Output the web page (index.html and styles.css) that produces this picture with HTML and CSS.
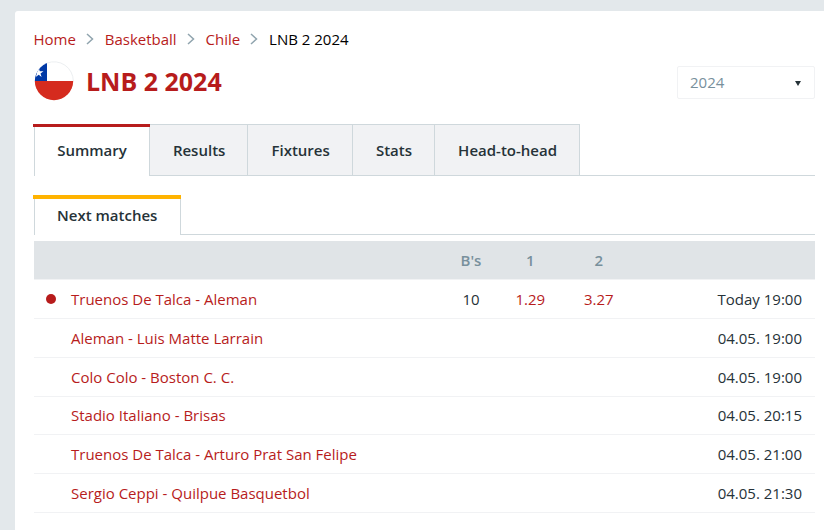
FILE: index.html
```html
<!DOCTYPE html>
<html lang="en">

<head>
  <meta charset="UTF-8">
  <meta name="viewport" content="width=device-width, initial-scale=1.0">
  <title>LNB 2 2024</title>
  <link rel="stylesheet" href="styles.css">
</head>

<body>
  <main class="card">
    <nav class="breadcrumb">
      <a href="#">Home</a>
      <svg class="chevron" viewBox="0 0 8 12"><path d="M1 1l5.500 5L1 11"/></svg>
      <a href="#">Basketball</a>
      <svg class="chevron" viewBox="0 0 8 12"><path d="M1 1l5.500 5L1 11"/></svg>
      <a href="#">Chile</a>
      <svg class="chevron" viewBox="0 0 8 12"><path d="M1 1l5.500 5L1 11"/></svg>
      <span>LNB 2 2024</span>
    </nav>

    <header class="title-bar">
      <svg class="flag" viewBox="0 0 40 40">
        <clipPath id="round"><circle cx="20" cy="20" r="19.200"/></clipPath>
        <g clip-path="url(#round)">
          <path fill="#fff" d="M0 0h40v20H0z"/>
          <path fill="#0039a6" d="M0 0h13v20H0z"/>
          <path fill="#d52b1e" d="M0 20h40v20H0z"/>
          <path fill="#fff" d="M4.700 6.700l1.100 3.500h3.700l-3 2.200 1.100 3.500-2.900-2.100-3 2.100 1.200-3.500-3-2.200h3.700z"/>
        </g>
        <path class="flag-rim" d="M13 2.100A19.300 19.300 0 0 1 39.300 20"/>
      </svg>
      <h1>LNB 2 2024</h1>
      <div class="season">
        <span>2024</span>
        <svg class="caret" viewBox="0 0 6 5"><path d="M0 0h6L3 5z"/></svg>
      </div>
    </header>

    <ul class="tabs">
      <li class="tab active">Summary</li>
      <li class="tab">Results</li>
      <li class="tab">Fixtures</li>
      <li class="tab">Stats</li>
      <li class="tab">Head-to-head</li>
    </ul>

    <div class="subtabs">
      <div class="subtab">Next matches</div>
    </div>

    <table class="matches">
      <colgroup>
        <col class="col-live">
        <col class="col-match">
        <col class="col-books">
        <col class="col-odds">
        <col class="col-odds">
        <col>
      </colgroup>
      <thead>
        <tr><th></th><th></th><th>B's</th><th>1</th><th>2</th><th></th></tr>
      </thead>
      <tbody>
        <tr>
          <td><span class="live"></span></td>
          <td class="match"><a href="#">Truenos De Talca - Aleman</a></td>
          <td>10</td>
          <td><a href="#">1.29</a></td>
          <td><a href="#">3.27</a></td>
          <td class="date">Today 19:00</td>
        </tr>
        <tr>
          <td></td>
          <td class="match"><a href="#">Aleman - Luis Matte Larrain</a></td>
          <td></td><td></td><td></td>
          <td class="date">04.05. 19:00</td>
        </tr>
        <tr>
          <td></td>
          <td class="match"><a href="#">Colo Colo - Boston C. C.</a></td>
          <td></td><td></td><td></td>
          <td class="date">04.05. 19:00</td>
        </tr>
        <tr class="short">
          <td></td>
          <td class="match"><a href="#">Stadio Italiano - Brisas</a></td>
          <td></td><td></td><td></td>
          <td class="date">04.05. 20:15</td>
        </tr>
        <tr>
          <td></td>
          <td class="match"><a href="#">Truenos De Talca - Arturo Prat San Felipe</a></td>
          <td></td><td></td><td></td>
          <td class="date">04.05. 21:00</td>
        </tr>
        <tr>
          <td></td>
          <td class="match"><a href="#">Sergio Ceppi - Quilpue Basquetbol</a></td>
          <td></td><td></td><td></td>
          <td class="date">04.05. 21:30</td>
        </tr>
      </tbody>
    </table>
  </main>
</body>

</html>
```
FILE: styles.css
```css
* {
  margin: 0;
  padding: 0;
  box-sizing: border-box;
}

body {
  height: 530px;
  padding: 11px 0 0 15px;
  overflow: hidden;
  background: #e3e8eb;
  color: #263238;
  font: 15px/20px 'Open Sans', sans-serif;
}

a {
  color: #b71c1c;
  text-decoration: none;
}

.card {
  height: 519px;
  padding: 18px 9px 0 19px;
  background: #fff;
  border-radius: 3px 0 0 0;
}

.breadcrumb {
  display: flex;
  align-items: center;
  height: 20px;
  margin-left: -0.6px;
  color: #000;
}

.chevron {
  width: 8px;
  height: 12px;
  margin: 0 10.9px 0 10px;
  fill: none;
  stroke: #90a4ae;
  stroke-width: 1.5;
}

.title-bar {
  display: flex;
  align-items: center;
  height: 40px;
  margin-top: 12px;
}

.flag {
  width: 40px;
  height: 40px;
}

.flag-rim {
  fill: none;
  stroke: #eceff1;
}

h1 {
  margin-left: 12px;
  color: #b71c1c;
  font-size: 25px;
  line-height: 34px;
}

.season {
  display: flex;
  align-items: center;
  justify-content: space-between;
  width: 138px;
  height: 33px;
  margin: 3px 0 0 auto;
  padding: 0 13px 0 12px;
  border: 1px solid #f1f2f4;
  border-radius: 2px;
  color: #78909c;
}

.season span {
  padding-bottom: 2px;
}

.caret {
  width: 6px;
  height: 5px;
  margin-top: 2px;
  fill: #263238;
}

.tabs {
  display: flex;
  height: 52px;
  margin-top: 23px;
  border-bottom: 1px solid #cfd8dc;
  list-style: none;
  font-weight: 600;
}

.tab {
  padding: 15px 22.1px 0 23px;
  border: 1px solid #cfd8dc;
  border-width: 1px 1px 0 0;
  background: #f1f2f4;
}

.tab.active {
  position: relative;
  height: 52px;
  padding-left: 22.2px;
  border-left-width: 1px;
  background: #fff;
}

.tab.active::before,
.subtab::before {
  content: '';
  position: absolute;
  top: -1px;
  left: -2px;
  right: -1px;
  height: 3px;
  background: #b71c1c;
}

.subtabs {
  display: flex;
  height: 40px;
  margin-top: 19px;
  border-bottom: 1px solid #cfd8dc;
  font-weight: 600;
}

.subtab {
  position: relative;
  height: 40px;
  padding: 10px 23px 0 22px;
  border: 1px solid #cfd8dc;
  border-width: 0 1px;
  background: #fff;
}

.subtab::before {
  top: 0;
  height: 4px;
  background: #ffb300;
}

.matches {
  width: 100%;
  margin-top: 6px;
  border-collapse: separate;
  border-spacing: 0;
  table-layout: fixed;
}

.col-live {
  width: 37px;
}

.col-match {
  width: 375px;
}

.col-books {
  width: 50px;
}

.col-odds {
  width: 68.5px;
}

th,
td {
  height: 39px;
  border-bottom: 1px solid #f1f2f4;
  text-align: center;
}

th {
  background: #e0e4e7;
  background-clip: padding-box;
  color: #78909c;
  font-weight: 600;
}

.short td {
  height: 38px;
  padding-bottom: 1px;
}

td.match {
  text-align: left;
}

td.date {
  padding-right: 13px;
  text-align: right;
}

.live {
  display: block;
  width: 10px;
  height: 10px;
  margin-left: 12px;
  border-radius: 50%;
  background: #b71c1c;
}
```
